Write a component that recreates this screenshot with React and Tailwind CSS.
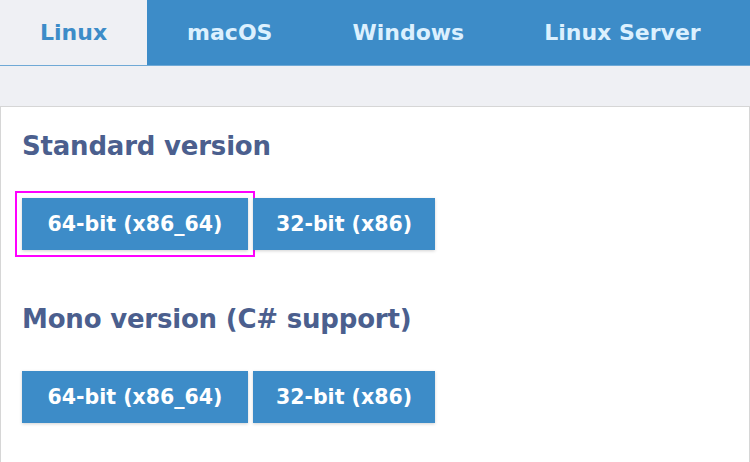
const tabs = ["Linux", "macOS", "Windows", "Linux Server"];

function DownloadButton({ label, width, focused }) {
  return (
    <button
      className={`${width} h-[52px] bg-[#3d8cc8] text-white text-[20.5px] font-bold shadow-[0_1px_3px_rgba(0,0,0,0.18)] ${
        focused ? "outline-2 outline-[#ff00ff] outline-offset-[5px]" : ""
      }`}
    >
      {label}
    </button>
  );
}

function Section({ title, focusFirst }) {
  return (
    <div>
      <h2 className="text-[26px] leading-[34px] tracking-[-0.2px] font-bold text-[#4b5f8e]">{title}</h2>
      <div className="flex gap-[5px] mt-[35px]">
        <DownloadButton label="64-bit (x86_64)" width="w-[226px]" focused={focusFirst} />
        <DownloadButton label="32-bit (x86)" width="w-[182px]" />
      </div>
    </div>
  );
}

export default function App() {
  return (
    <div
      className="w-[750px] h-[462px] overflow-hidden bg-[#eff0f4]"
      style={{ fontFamily: '"DejaVu Sans", sans-serif' }}
    >
      <div className="flex h-[66px] bg-[#3d8cc8] border-b border-[#6fa9d6]">
        {tabs.map((t, i) => (
          <div
            key={t}
            className={`flex items-center px-10 text-[22px] font-bold ${
              i === 0 ? "bg-[#eff0f4] text-[#3d8cc8]" : "text-[#dcf0fe]"
            }`}
          >
            {t}
          </div>
        ))}
      </div>
      <div className="h-[40px]" />
      <div className="bg-white border border-[#d6d6d6] h-[400px] pl-[21px] pt-[22px]">
        <Section title="Standard version" focusFirst />
        <div className="h-[52px]" />
        <Section title="Mono version (C# support)" />
      </div>
    </div>
  );
}
